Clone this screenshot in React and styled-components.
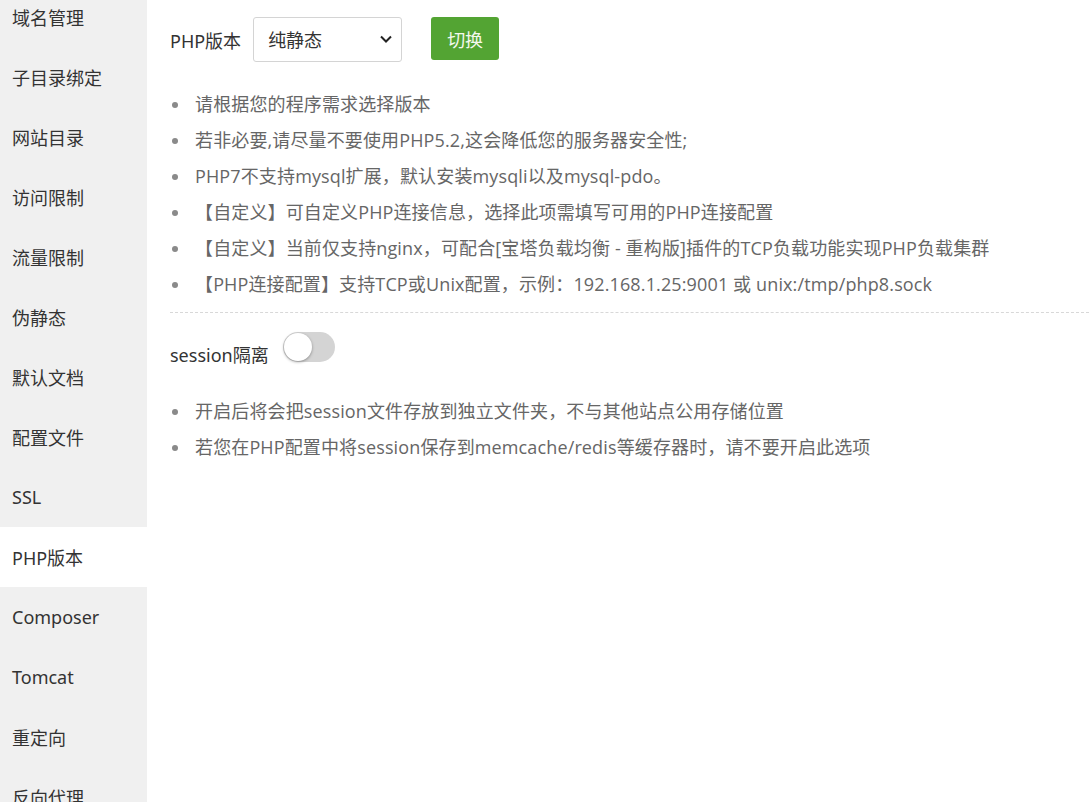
import React from 'react';
import styled, { createGlobalStyle } from 'styled-components';

const Global = createGlobalStyle`
  html, body {
    margin: 0;
    padding: 0;
    height: 802px;
    overflow: hidden;
    background: #fff;
  }
  body {
    font-family: "Noto Sans", "Noto Sans CJK SC", sans-serif;
  }
  * { box-sizing: border-box; }
`;

const Layout = styled.div`
  display: flex;
  height: 802px;
`;

const Sidebar = styled.ul`
  width: 147px;
  flex-shrink: 0;
  margin: 0;
  padding: 0;
  list-style: none;
  background: #f0f0f0;
  overflow: hidden;
`;

const SideInner = styled.div`
  margin-top: -13px;
`;

const SideItem = styled.li`
  height: 60px;
  display: flex;
  align-items: center;
  padding-left: 12px;
  font-size: 18px;
  color: #333;
  background: ${p => (p.$active ? '#fff' : 'transparent')};
  cursor: pointer;
`;

const Content = styled.div`
  flex: 1;
  padding: 17px 0 0 23px;
  color: #333;
`;

const Row = styled.div`
  display: flex;
  align-items: center;
`;

const Label = styled.span`
  font-size: 18px;
  color: #333;
  margin-right: 12px;
`;

const SelectWrap = styled.div`
  position: relative;
  width: 149px;
  height: 45px;
  margin-right: 29px;
`;

const Select = styled.select`
  appearance: none;
  width: 100%;
  height: 100%;
  border: 1px solid #d4d4d4;
  border-radius: 3px;
  background: #fff;
  padding-left: 14px;
  font-family: inherit;
  font-size: 18px;
  color: #333;
  outline: none;
`;

const Chevron = styled.svg`
  position: absolute;
  right: 9px;
  top: 16px;
  pointer-events: none;
`;

const Button = styled.button`
  width: 68px;
  height: 43px;
  border: none;
  border-radius: 3px;
  background: #53a433;
  color: #f3f8ee;
  font-family: inherit;
  font-size: 18px;
  cursor: pointer;
  margin-top: -2px;
`;

const Tips = styled.ul`
  list-style: none;
  margin: ${p => p.$top}px 0 0;
  padding: 0;
`;

const Tip = styled.li`
  position: relative;
  padding-left: 25px;
  line-height: 36px;
  height: 36px;
  font-family: "Open Sans", "Noto Sans CJK SC", sans-serif;
  font-size: 18px;
  letter-spacing: 0.13px;
  color: #666;
  white-space: nowrap;
  &::before {
    content: '';
    position: absolute;
    left: 2px;
    top: 16px;
    width: 6px;
    height: 6px;
    border-radius: 50%;
    background: #8a8a8a;
  }
`;

const Divider = styled.div`
  margin-top: 10px;
  border-top: 1px dashed #d8d8d8;
`;

const SessionRow = styled.div`
  display: flex;
  align-items: flex-start;
  margin-top: 19px;
`;

const SessionLabel = styled.span`
  font-size: 18px;
  color: #333;
  margin-top: 9px;
  margin-right: 14px;
`;

const Toggle = styled.div`
  position: relative;
  width: 52px;
  height: 30px;
  border-radius: 15px;
  background: #d4d4d4;
  &::after {
    content: '';
    position: absolute;
    left: 1px;
    top: 1px;
    width: 28px;
    height: 28px;
    border-radius: 50%;
    background: #fff;
    box-shadow: 0 1px 3px rgba(0, 0, 0, 0.35);
  }
`;

const menu = [
  '域名管理', '子目录绑定', '网站目录', '访问限制', '流量限制', '伪静态', '默认文档',
  '配置文件', 'SSL', 'PHP版本', 'Composer', 'Tomcat', '重定向', '反向代理',
];

const phpTips = [
  '请根据您的程序需求选择版本',
  '若非必要,请尽量不要使用PHP5.2,这会降低您的服务器安全性;',
  'PHP7不支持mysql扩展，默认安装mysqli以及mysql-pdo。',
  '【自定义】可自定义PHP连接信息，选择此项需填写可用的PHP连接配置',
  '【自定义】当前仅支持nginx，可配合[宝塔负载均衡 - 重构版]插件的TCP负载功能实现PHP负载集群',
  '【PHP连接配置】支持TCP或Unix配置，示例：192.168.1.25:9001 或 unix:/tmp/php8.sock',
];

const sessionTips = [
  '开启后将会把session文件存放到独立文件夹，不与其他站点公用存储位置',
  '若您在PHP配置中将session保存到memcache/redis等缓存器时，请不要开启此选项',
];

export default function App() {
  return (
    <Layout>
      <Global />
      <Sidebar>
        <SideInner>
          {menu.map(m => (
            <SideItem key={m} $active={m === 'PHP版本'}>{m}</SideItem>
          ))}
        </SideInner>
      </Sidebar>
      <Content>
        <Row>
          <Label>PHP版本</Label>
          <SelectWrap>
            <Select defaultValue="00">
              <option value="00">纯静态</option>
              <option value="74">PHP-74</option>
              <option value="80">PHP-80</option>
            </Select>
            <Chevron width="14" height="12" viewBox="0 0 14 12">
              <path d="M2 3.5 L7 8.5 L12 3.5" fill="none" stroke="#222" strokeWidth="2" />
            </Chevron>
          </SelectWrap>
          <Button>切换</Button>
        </Row>
        <Tips $top={24}>
          {phpTips.map(t => <Tip key={t}>{t}</Tip>)}
        </Tips>
        <Divider />
        <SessionRow>
          <SessionLabel>session隔离</SessionLabel>
          <Toggle />
        </SessionRow>
        <Tips $top={26}>
          {sessionTips.map(t => <Tip key={t}>{t}</Tip>)}
        </Tips>
      </Content>
    </Layout>
  );
}
